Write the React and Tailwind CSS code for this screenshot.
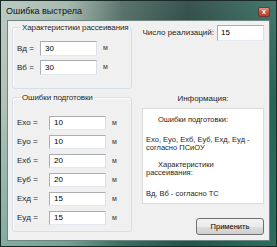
import React from 'react';

const font = { fontFamily: '"Liberation Sans", Arial, sans-serif' };

const Field = ({ label, value, labelW, inputW, h }) => (
  <div className="flex items-center">
    <span className="text-[8px] text-[#1e1e1e] leading-none whitespace-nowrap" style={{ width: labelW }}>
      {label}
    </span>
    <div
      className="bg-white border border-[#abadb3] border-b-[#e3e9ef] border-r-[#dbdfe6] flex items-center pl-[4px] text-[8px] text-black"
      style={{ width: inputW, height: h }}
    >
      {value}
    </div>
    <span className="text-[7px] text-[#333] ml-[6px]">м</span>
  </div>
);

const Group = ({ title, children, className }) => (
  <fieldset className={`border border-[#d5dfe5] rounded-[3px] shadow-[inset_1px_1px_0_#fff] ${className}`}>
    <legend className="ml-[4px] px-[1px] text-[8px] leading-[9px] text-[#1e1e1e] whitespace-nowrap tracking-[-0.1px]">
      {title}
    </legend>
    {children}
  </fieldset>
);

export default function App() {
  const errors = [
    ['Exo =', '10'],
    ['Eyo =', '10'],
    ['Exб =', '20'],
    ['Eyб =', '20'],
    ['Exд =', '15'],
    ['Eyд =', '15'],
  ];

  return (
    <div
      className="w-[277px] h-[247px] flex flex-col border border-[#1a2a27] overflow-hidden"
      style={{
        ...font,
        background:
          'linear-gradient(180deg, rgba(255,255,255,0.12) 0%, rgba(0,0,0,0) 40%, rgba(40,130,110,0.35) 100%), linear-gradient(90deg,#b3c3bb 0%,#9cb1a5 24%,#45625a 44%,#1f3d37 68%,#2c6558 100%)',
      }}
    >
      {/* title bar */}
      <div className="h-[19px] flex items-center justify-between pl-[5px] pr-[6px]">
        <span className="text-[9px] text-[#111] mt-[2px]">Ошибка выстрела</span>
        <div className="w-[12px] h-[10px] mt-[2px] rounded-[2px] border border-[#6b3a30] bg-[linear-gradient(180deg,#e49a86_0%,#c9533f_50%,#b8402c_100%)] flex items-center justify-center text-white text-[7px] leading-none font-bold">
          x
        </div>
      </div>

      {/* client area */}
      <div className="mx-[6px] h-[221px] bg-[#f0f0f0] border border-[#6d8680] flex">
        <div className="w-[124px] shrink-0 pl-[4px] pt-[2px] flex flex-col gap-[4px]">
          <Group title="Характеристики рассеивания" className="h-[66px] pl-[4px]">
            <div className="flex flex-col gap-[4px] mt-[9px]">
              <Field label="Вд =" value="30" labelW={23} inputW={57} h={15} />
              <Field label="Вб =" value="30" labelW={23} inputW={57} h={15} />
            </div>
          </Group>
          <Group title="Ошибки подготовки" className="h-[139px] pl-[4px]">
            <div className="flex flex-col gap-[5px] mt-[14px]">
              {errors.map(([l, v]) => (
                <Field key={l} label={l} value={v} labelW={32} inputW={57} h={14} />
              ))}
            </div>
          </Group>
        </div>

        <div className="flex-1 flex flex-col pl-[10px] pr-[5px] pt-[4px]">
          <div className="flex items-center justify-end gap-[3px]">
            <span className="text-[8px] text-[#1e1e1e] whitespace-nowrap">Число реализаций:</span>
            <div className="w-[47px] h-[16px] bg-white border border-[#abadb3] border-b-[#e3e9ef] border-r-[#dbdfe6] flex items-center pl-[3px] text-[8px] text-black">
              15
            </div>
          </div>

          <div className="mt-[53px] text-center text-[8px] leading-[9px] text-[#1e1e1e]">Информация:</div>

          <div className="mt-[5px] h-[96px] bg-white border border-[#dcdcdc] px-[3px] pt-[7px] text-[7.5px] leading-[8.5px] text-[#1e1e1e]">
            <p className="pl-[12px]">Ошибки подготовки:</p>
            <p className="mt-[11px]">Exo, Eyo, Exб, Eyб, Exд, Eyд - согласно ПСиОУ</p>
            <p className="mt-[8px] pl-[12px]">Характеристики</p>
            <p>рассеивания:</p>
            <p className="mt-[12px]">Вд, Вб - согласно ТС</p>
          </div>

          <div className="mt-auto mb-[5px] self-end w-[68px] h-[17px] rounded-[3px] border border-[#707070] bg-[linear-gradient(180deg,#f2f2f2_0%,#ebebeb_50%,#dddddd_51%,#cfcfcf_100%)] flex items-center justify-center text-[7.5px] text-black">
            Применить
          </div>
        </div>
      </div>
    </div>
  );
}
